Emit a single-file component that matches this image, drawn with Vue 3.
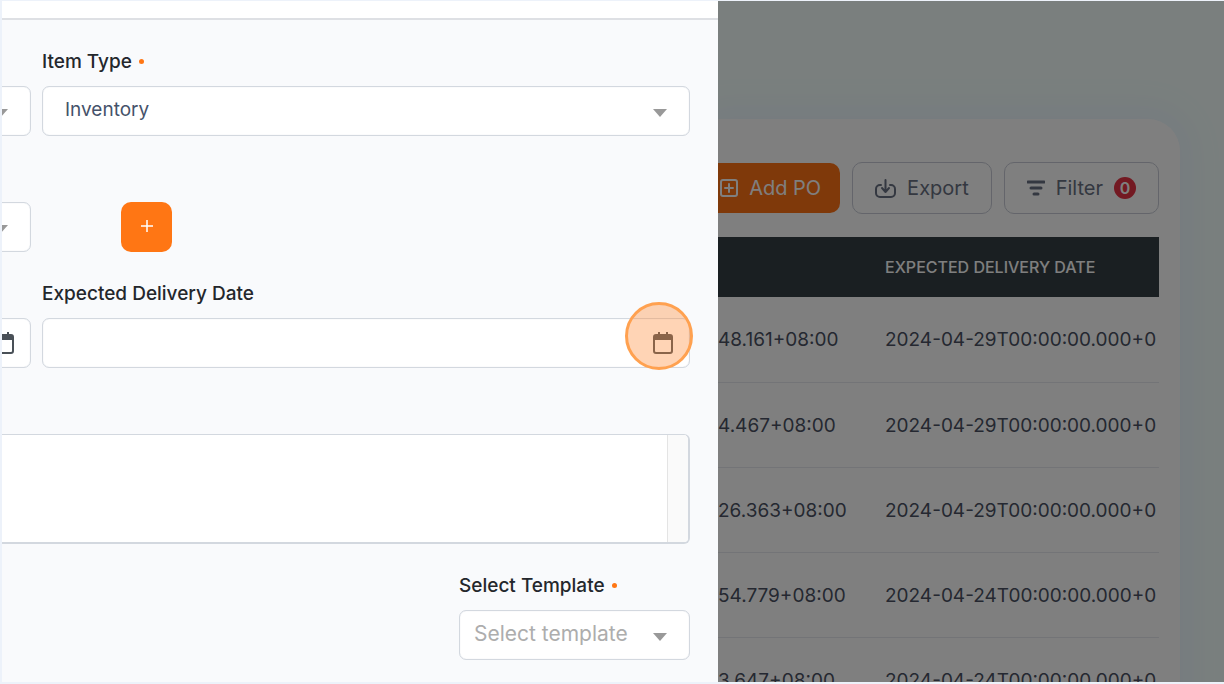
<script setup>
import { ref } from 'vue'

const itemType = ref('Inventory')
const template = ref('')
const rows = [
  { created: '48.161+08:00', expected: '2024-04-29T00:00:00.000+0' },
  { created: '4.467+08:00', expected: '2024-04-29T00:00:00.000+0' },
  { created: '26.363+08:00', expected: '2024-04-29T00:00:00.000+0' },
  { created: '54.779+08:00', expected: '2024-04-24T00:00:00.000+0' },
  { created: '3.647+08:00', expected: '2024-04-24T00:00:00.000+0' },
]
</script>

<template>
  <div class="frame">
    <section class="drawer">
      <header class="drawer-head"></header>
      <form class="form" @submit.prevent>
        <div class="row">
          <div class="stub">
            <div class="control">
              <select aria-label="Order type"><option></option></select>
              <svg class="arrow" viewBox="0 0 14 8"><path d="M0 0h14L7 8z" /></svg>
            </div>
          </div>
          <div class="field">
            <label for="item-type">Item Type <i class="dot"></i></label>
            <div class="control">
              <select id="item-type" v-model="itemType" class="wide-pad">
                <option>Inventory</option>
              </select>
              <svg class="arrow" viewBox="0 0 14 8"><path d="M0 0h14L7 8z" /></svg>
            </div>
          </div>
        </div>

        <div class="row">
          <div class="stub">
            <div class="control">
              <select aria-label="Supplier"><option></option></select>
              <svg class="arrow" viewBox="0 0 14 8"><path d="M0 0h14L7 8z" /></svg>
            </div>
          </div>
          <div class="field">
            <button type="button" class="add" aria-label="Add supplier">
              <svg viewBox="0 0 12 12"><path d="M6 0v12M0 6h12" /></svg>
            </button>
          </div>
        </div>

        <div class="row">
          <div class="stub">
            <div class="control">
              <input type="text" aria-label="Order date" />
              <svg class="calendar" viewBox="0 0 20 23">
                <path class="line" d="M3 4h14a2 2 0 0 1 2 2v14a2 2 0 0 1-2 2H3a2 2 0 0 1-2-2V6a2 2 0 0 1 2-2zM6 1v4M14 1v4" />
                <path d="M1 4h18v5H1z" />
              </svg>
            </div>
          </div>
          <div class="field">
            <label for="delivery">Expected Delivery Date</label>
            <div class="control">
              <input id="delivery" type="text" />
              <svg class="calendar" viewBox="0 0 20 23">
                <path class="line" d="M3 4h14a2 2 0 0 1 2 2v14a2 2 0 0 1-2 2H3a2 2 0 0 1-2-2V6a2 2 0 0 1 2-2zM6 1v4M14 1v4" />
                <path d="M1 4h18v5H1z" />
              </svg>
              <span class="halo"></span>
            </div>
          </div>
        </div>

        <div class="notes">
          <textarea aria-label="Notes"></textarea>
          <span class="gutter"></span>
        </div>

        <div class="template field">
          <label for="template">Select Template <i class="dot"></i></label>
          <div class="control">
            <select id="template" v-model="template" class="placeholder">
              <option value="">Select template</option>
            </select>
            <svg class="arrow" viewBox="0 0 14 8"><path d="M0 0h14L7 8z" /></svg>
          </div>
        </div>
      </form>
    </section>

    <main class="page">
      <div class="card">
        <div class="toolbar">
          <button type="button" class="btn primary">
            <svg width="18" height="18" viewBox="0 0 18 18">
              <rect x="1" y="1" width="16" height="16" rx="2" /><path d="M9 5v8M5 9h8" />
            </svg>
            Add PO
          </button>
          <button type="button" class="btn">
            <svg class="export" width="21" height="20" viewBox="0 0 21 20">
              <path d="M6 7H5a4 4 0 0 0-4 4v4a4 4 0 0 0 4 4h11a4 4 0 0 0 4-4v-4a4 4 0 0 0-4-4h-1M10.500 2v12M7 10l3.500 4 3.500-4" />
            </svg>
            Export
          </button>
          <button type="button" class="btn">
            <svg class="filter" width="18" height="16" viewBox="0 0 18 16">
              <path d="M1 2h16M4 8h10M7 14h4" />
            </svg>
            Filter <span class="badge">0</span>
          </button>
        </div>
        <table>
          <thead>
            <tr><th class="created"></th><th>EXPECTED DELIVERY DATE</th></tr>
          </thead>
          <tbody>
            <tr v-for="(r, i) in rows" :key="i">
              <td class="created">{{ r.created }}</td>
              <td>{{ r.expected }}</td>
            </tr>
          </tbody>
        </table>
      </div>
      <div class="backdrop"></div>
    </main>
  </div>
</template>

<style>
body { overflow: hidden; }
</style>

<style scoped>
* { box-sizing: border-box; }

.frame {
  display: grid;
  grid-template-columns: 716fr 506fr;
  height: 100vh;
  padding: 1px 0 2px 2px;
  background: #edf2fa;
  font-family: Inter, "Liberation Sans", sans-serif;
  font-size: 20px;
  overflow: hidden;
}
button, input, select, textarea { font: inherit; margin: 0; }

.drawer {
  min-width: 0;
  background: #f9fafc;
  overflow: hidden;
}
.drawer-head {
  height: 19px;
  background: #fff;
  border-bottom: 2px solid #dee0e4;
}
.form {
  display: flex;
  flex-direction: column;
  gap: 28px;
  padding: 28px 28px 0 0;
}
.row {
  display: grid;
  grid-template-columns: 29px 1fr;
  gap: 11px;
  height: 88px;
  align-items: end;
}
.stub {
  display: flex;
  justify-content: flex-end;
  overflow: hidden;
}
.stub .control { flex: 0 0 80px; }
label {
  display: flex;
  align-items: center;
  gap: 7px;
  height: 24px;
  margin-bottom: 13px;
  color: #24272c;
  font-size: 19px;
  font-weight: 500;
}
.dot {
  width: 5px;
  height: 5px;
  border-radius: 50%;
  background: #ff7614;
}
.control {
  position: relative;
  height: 50px;
}
.control input, .control select {
  display: block;
  width: 100%;
  height: 100%;
  border: 1px solid #d3d8df;
  border-radius: 7px;
  background: #fff;
  color: #45526a;
  padding: 0 14px 4px;
  font-size: 19px;
  appearance: none;
  outline: 0;
  box-shadow: inset 0 0 1px #d3d8df;
}
.control select.wide-pad { padding-left: 22px; }
.control select.placeholder {
  color: #adadad;
  font-size: 21px;
}
.arrow {
  position: absolute;
  right: 23px;
  top: 23px;
  width: 14px;
  height: 8px;
  fill: #999;
}
.calendar {
  position: absolute;
  right: 17px;
  top: 13px;
  width: 20px;
  height: 23px;
  fill: #495057;
}
.calendar .line {
  fill: none;
  stroke: #495057;
  stroke-width: 2;
}
.halo {
  position: absolute;
  right: -3px;
  top: -16px;
  width: 68px;
  height: 68px;
  border: 3px solid #ffa150;
  border-radius: 50%;
  background: rgba(255, 136, 50, 0.36);
}
.add {
  display: grid;
  place-items: center;
  width: 51px;
  height: 50px;
  margin-left: 79px;
  border: 0;
  border-radius: 10px;
  background: #ff7614;
}
.add svg {
  width: 12px;
  height: 12px;
  margin-bottom: 2px;
  stroke: #fff;
  stroke-width: 1.5;
}
.notes {
  display: flex;
  height: 110px;
  margin-top: 38px;
  border: 1px solid #d3d8df;
  border-width: 1px 2px 2px 0;
  border-radius: 0 6px 6px 0;
  background: #fff;
  overflow: hidden;
}
.notes textarea {
  flex: 1;
  border: 0;
  resize: none;
  outline: 0;
  background: #fff;
}
.gutter {
  width: 21px;
  border-left: 1px solid #e4e4e4;
  background: #fafafa;
}
.template {
  align-self: flex-end;
  width: 231px;
  margin-top: 1px;
}

.page {
  position: relative;
  min-width: 0;
  padding: 118px 44px 0 0;
  background: #f4fffc;
  overflow: hidden;
}
.card {
  min-height: 100%;
  padding: 43px 21px 0 0;
  border-radius: 0 32px 0 0;
  background: #fff;
  box-shadow: 0 0 32px 14px #ecf8ff;
}
.toolbar {
  display: flex;
  justify-content: flex-end;
  align-items: center;
  gap: 12px;
  margin-bottom: 23px;
}
.btn {
  display: flex;
  align-items: center;
  gap: 11px;
  flex: none;
  height: 52px;
  padding: 0 22px;
  border: 1px solid #c8cbd6;
  border-radius: 10px;
  background: transparent;
  color: #687082;
}
.btn svg {
  fill: none;
  stroke: #687082;
  stroke-width: 2;
  stroke-linecap: round;
  stroke-linejoin: round;
}
.btn .filter { stroke-width: 3; }
.btn.primary {
  height: 50px;
  padding: 0 19px;
  border: 0;
  background: #ff7214;
  color: #fff;
}
.btn.primary svg { stroke: #fff; }
.badge {
  display: grid;
  place-items: center;
  width: 22px;
  height: 22px;
  border-radius: 50%;
  background: #e63244;
  color: #fff;
  font-size: 16px;
  font-weight: 600;
}
table {
  width: 100%;
  table-layout: fixed;
  border-collapse: separate;
  border-spacing: 0;
}
th, td {
  padding: 0;
  overflow: hidden;
  text-align: left;
  white-space: nowrap;
}
th {
  height: 60px;
  background: #343e44;
  color: #fff;
  font-size: 16px;
  font-weight: 500;
}
.created { width: 167px; }
td {
  height: 85px;
  border-bottom: 1px solid #e6e8ee;
  color: #4a5162;
  font-size: 19px;
}
tbody tr:first-child td { height: 86px; }
.backdrop {
  position: absolute;
  inset: 0;
  background: rgba(0, 0, 0, 0.5);
}
</style>
